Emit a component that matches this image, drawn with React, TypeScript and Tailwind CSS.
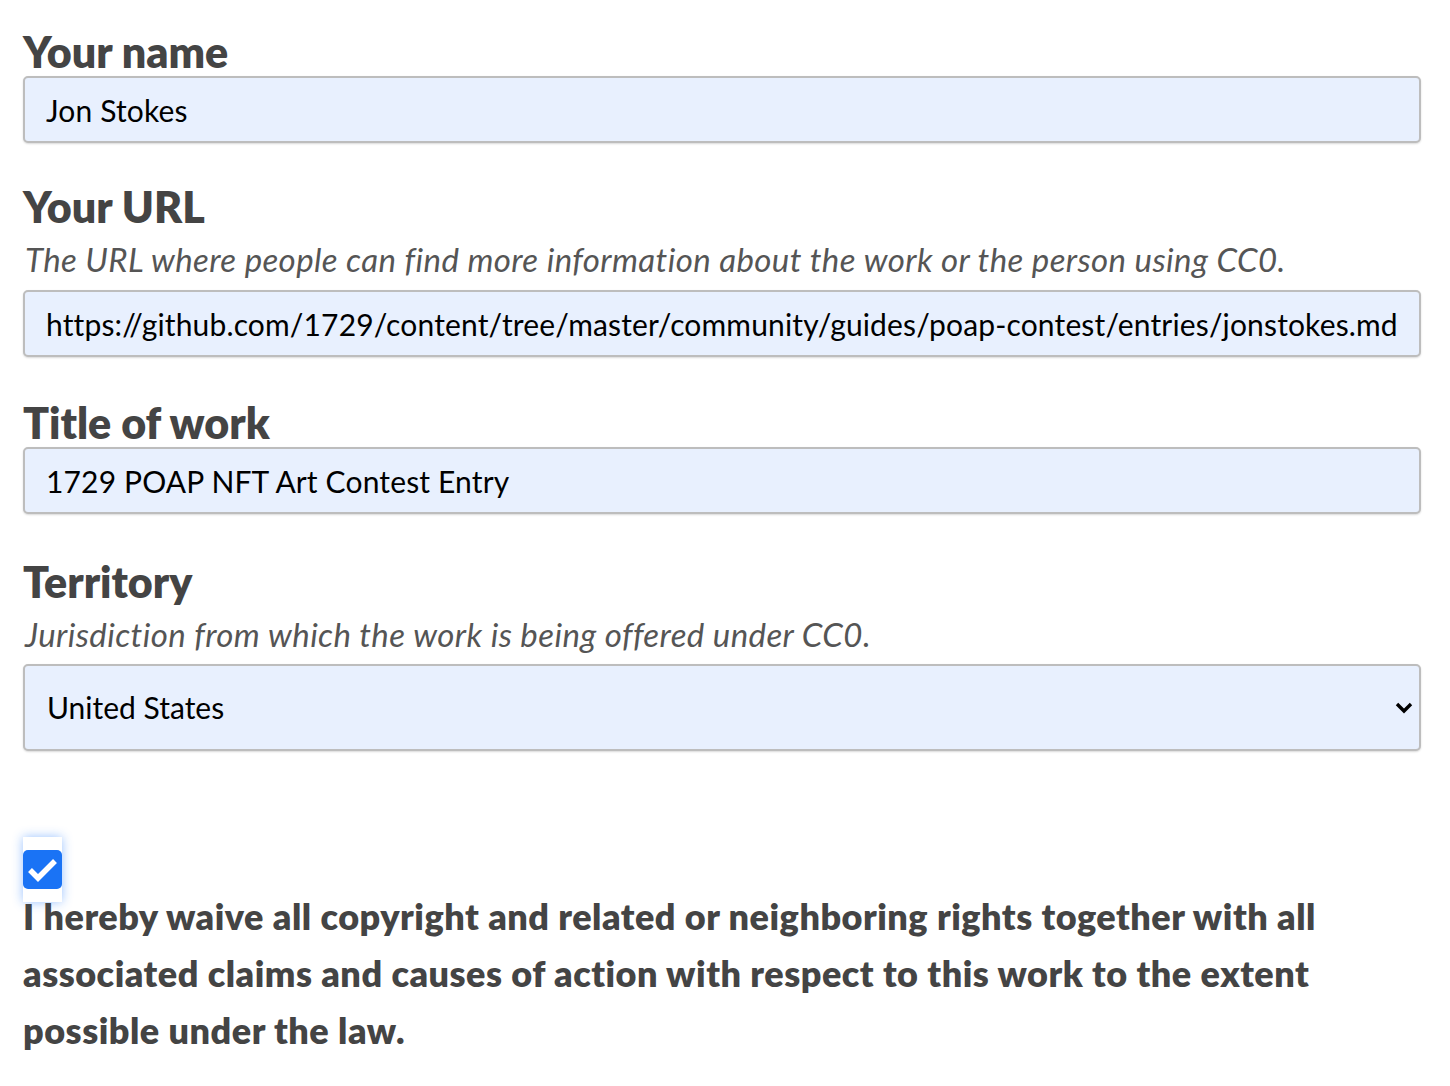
import React from 'react';

const font = { fontFamily: 'Lato, "Noto Sans", sans-serif' };

function Label({ children }: { children: React.ReactNode }) {
  return <p className="font-extrabold text-[43px] leading-[48px] text-[#444]">{children}</p>;
}

function Hint({ children }: { children: React.ReactNode }) {
  return (
    <p className="mt-[8px] italic text-[33px] leading-[40px] tracking-[0.4px] text-[#555] pl-[2px]">
      {children}
    </p>
  );
}

function Field({ value }: { value: string }) {
  return (
    <input
      readOnly
      defaultValue={value}
      className="w-full h-[67px] rounded-[5px] border-2 border-[#bdbdbd] bg-[#e8f0fe] px-[21px] text-[30px] tracking-[0.15px] text-black shadow-[0_1px_2px_rgba(0,0,0,0.15)] outline-none"
    />
  );
}

export default function App() {
  return (
    <div className="min-h-screen bg-white pl-[23px] pr-[29px] pt-[28px]" style={font}>
      <Label>Your name</Label>
      <Field value="Jon Stokes" />

      <div className="mt-[40px]">
        <Label>Your URL</Label>
      </div>
      <Hint>The URL where people can find more information about the work or the person using CC0.</Hint>
      <div className="mt-[11px]">
        <Field value="https://github.com/1729/content/tree/master/community/guides/poap-contest/entries/jonstokes.md" />
      </div>

      <div className="mt-[42px]">
        <Label>Title of work</Label>
      </div>
      <Field value="1729 POAP NFT Art Contest Entry" />

      <div className="mt-[44px]">
        <Label>Territory</Label>
      </div>
      <Hint>Jurisdiction from which the work is being offered under CC0.</Hint>
      <div className="relative mt-[10px]">
        <select
          defaultValue="us"
          className="w-full h-[87px] appearance-none rounded-[5px] border-2 border-[#bdbdbd] bg-[#e8f0fe] px-[22px] text-[30px] text-black shadow-[0_1px_2px_rgba(0,0,0,0.15)] outline-none"
        >
          <option value="us">United States</option>
        </select>
        <svg
          className="pointer-events-none absolute right-[7px] top-[36px]"
          width="20"
          height="16"
          viewBox="0 0 20 16"
        >
          <path d="M3 4 L10 11 L17 4" fill="none" stroke="#000" strokeWidth="3.4" />
        </svg>
      </div>

      <div className="mt-[86px] flex h-[65px] w-[39px] items-center justify-center bg-white shadow-[0_0_10px_rgba(30,120,255,0.45)]">
        <div className="flex h-[39px] w-[39px] items-center justify-center rounded-[5px] bg-[#1a73f5]">
          <svg width="39" height="39" viewBox="0 0 39 39">
            <path d="M7 20 L15 28 L32 11" fill="none" stroke="#fff" strokeWidth="5.5" />
          </svg>
        </div>
      </div>

      <p className="mt-[-14px] font-extrabold text-[36px] leading-[57px] tracking-[0.5px] text-[#444] pr-[80px]">
        I hereby waive all copyright and related or neighboring rights together with all associated claims and causes of action with respect to this work to the extent possible under the law.
      </p>
    </div>
  );
}
